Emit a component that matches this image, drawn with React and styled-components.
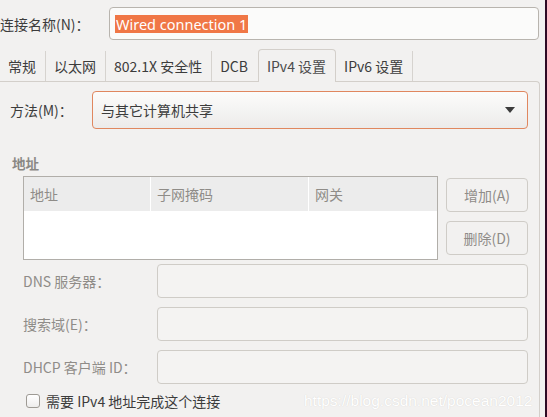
import styled, { createGlobalStyle } from "styled-components";

const GlobalStyle = createGlobalStyle`
  html, body {
    margin: 0;
    padding: 0;
    background: #f2f1f0;
  }
  body {
    font-family: "Noto Sans CJK SC", "Noto Sans", sans-serif;
    font-size: 14px;
    color: #3c3c3c;
  }
`;

const Window = styled.div`
  width: 547px;
  height: 417px;
  display: flex;
  overflow: hidden;
  background: #f2f1f0;
`;

const Main = styled.div`
  flex: 1;
  display: flex;
  flex-direction: column;
  min-width: 0;
`;

const Edge = styled.div`
  width: 2px;
  background: #2e0a24;
`;

const NameRow = styled.div`
  display: flex;
  align-items: center;
  height: 33px;
  margin-top: 7px;
  padding-right: 6px;
`;

const NameLabel = styled.span`
  width: 109px;
  flex-shrink: 0;
  white-space: nowrap;
`;

const Entry = styled.div`
  flex: 1;
  height: ${(p) => p.$h || 33}px;
  box-sizing: border-box;
  border: 1px solid ${(p) => (p.$disabled ? "#cfccc7" : "#b8b4ae")};
  border-radius: 4px;
  background: ${(p) => (p.$disabled ? "#f4f3f2" : "#fbfbfa")};
  display: flex;
  align-items: center;
  padding-left: 5px;
`;

const Selected = styled.span`
  background: #f07746;
  color: #ffffff;
  font-family: "Noto Sans", sans-serif;
  font-size: 14.5px;
  line-height: 18px;
  padding: 0 1px;
`;

const TabBar = styled.div`
  display: flex;
  align-items: flex-end;
  height: 32px;
  margin-top: 9px;
`;

const Tab = styled.div`
  height: 30px;
  box-sizing: border-box;
  display: flex;
  align-items: center;
  padding: 0 9px 0 8px;
  white-space: nowrap;
  position: relative;
  color: #3c3c3c;
  border-right: 1px solid ${(p) => (p.$sep ? "#d6d3cf" : "transparent")};
  ${(p) =>
    p.$active &&
    `
    border: 1px solid #d3cfca;
    border-bottom: none;
    border-radius: 4px 4px 0 0;
    background: #f2f1f0;
    margin-bottom: -1px;
    height: 33px;
    z-index: 1;
    color: #4c4c4c;
  `}
`;

const Panel = styled.div`
  flex: 1;
  border-top: 1px solid #d3cfca;
  border-right: 1px solid #d3cfca;
  border-top-right-radius: 4px;
  margin-right: 5px;
  display: flex;
  flex-direction: column;
  padding: 9px 11px 0 10px;
`;

const MethodRow = styled.div`
  display: flex;
  align-items: center;
`;

const MethodLabel = styled.span`
  width: 82px;
  flex-shrink: 0;
`;

const Combo = styled.div`
  flex: 1;
  height: 38px;
  box-sizing: border-box;
  border: 1px solid #e0875f;
  border-radius: 4px;
  background: linear-gradient(#fcfcfb, #ecebea);
  display: flex;
  align-items: center;
  justify-content: space-between;
  padding: 0 12px 0 8px;
`;

const Arrow = styled.span`
  width: 0;
  height: 0;
  border-left: 5px solid transparent;
  border-right: 5px solid transparent;
  border-top: 6px solid #3c3c3c;
`;

const Section = styled.div`
  margin-top: 24px;
  font-weight: bold;
  color: #8a8884;
  font-size: 13.5px;
  padding-left: 2px;
`;

const AddrRow = styled.div`
  display: flex;
  gap: 8px;
  margin-top: 3px;
  padding-left: 13px;
`;

const Table = styled.div`
  width: 415px;
  height: 84px;
  box-sizing: border-box;
  border: 1px solid #b1aea9;
  background: #ffffff;
`;

const HeaderRow = styled.div`
  display: grid;
  grid-template-columns: 126px 157px 1fr;
  gap: 1px;
  background: #ffffff;
  height: 34px;
`;

const HeaderCell = styled.div`
  background: #ececec;
  color: #8f8c88;
  display: flex;
  align-items: center;
  padding-left: 6px;
`;

const Buttons = styled.div`
  flex: 1;
  display: flex;
  flex-direction: column;
  gap: 9px;
  padding-top: 2px;
`;

const Button = styled.div`
  height: 34px;
  box-sizing: border-box;
  border: 1px solid #cfccc7;
  border-radius: 4px;
  color: #8f8c88;
  display: flex;
  align-items: center;
  justify-content: center;
`;

const Form = styled.div`
  display: grid;
  grid-template-columns: 134px 1fr;
  row-gap: 9px;
  align-items: center;
  margin-top: 4px;
  padding-left: 13px;
`;

const FieldLabel = styled.span`
  color: #8f8c88;
  white-space: nowrap;
`;

const CheckRow = styled.label`
  display: flex;
  align-items: center;
  gap: 6px;
  margin-top: 7px;
  padding-left: 16px;
  position: relative;
`;

const Box = styled.span`
  width: 14px;
  height: 14px;
  box-sizing: border-box;
  border: 1px solid #9e9a94;
  border-radius: 3px;
  background: linear-gradient(#ffffff, #eeedec);
`;

const Mark = styled.span`
  position: absolute;
  left: 294px;
  top: 50%;
  transform: translateY(-50%);
  color: #ffffff;
  font-family: "Liberation Sans", Arial, sans-serif;
  font-size: 15.5px;
  text-shadow: 0 0 1px #cfccc8;
  white-space: nowrap;
`;

export default function App() {
  return (
    <Window>
      <GlobalStyle />
      <Main>
        <NameRow>
          <NameLabel>连接名称(N)：</NameLabel>
          <Entry>
            <Selected>Wired connection 1</Selected>
          </Entry>
        </NameRow>
        <TabBar>
          <Tab $sep>常规</Tab>
          <Tab $sep>以太网</Tab>
          <Tab $sep>802.1X 安全性</Tab>
          <Tab>DCB</Tab>
          <Tab $active>IPv4 设置</Tab>
          <Tab $sep>IPv6 设置</Tab>
        </TabBar>
        <Panel>
          <MethodRow>
            <MethodLabel>方法(M)：</MethodLabel>
            <Combo>
              <span>与其它计算机共享</span>
              <Arrow />
            </Combo>
          </MethodRow>
          <Section>地址</Section>
          <AddrRow>
            <Table>
              <HeaderRow>
                <HeaderCell>地址</HeaderCell>
                <HeaderCell>子网掩码</HeaderCell>
                <HeaderCell>网关</HeaderCell>
              </HeaderRow>
            </Table>
            <Buttons>
              <Button>增加(A)</Button>
              <Button>删除(D)</Button>
            </Buttons>
          </AddrRow>
          <Form>
            <FieldLabel>DNS 服务器：</FieldLabel>
            <Entry $disabled $h={34} />
            <FieldLabel>搜索域(E)：</FieldLabel>
            <Entry $disabled $h={34} />
            <FieldLabel>DHCP 客户端 ID：</FieldLabel>
            <Entry $disabled $h={34} />
          </Form>
          <CheckRow>
            <Box />
            <span>需要 IPv4 地址完成这个连接</span>
            <Mark>https://blog.csdn.net/pocean2012</Mark>
          </CheckRow>
        </Panel>
      </Main>
      <Edge />
    </Window>
  );
}
